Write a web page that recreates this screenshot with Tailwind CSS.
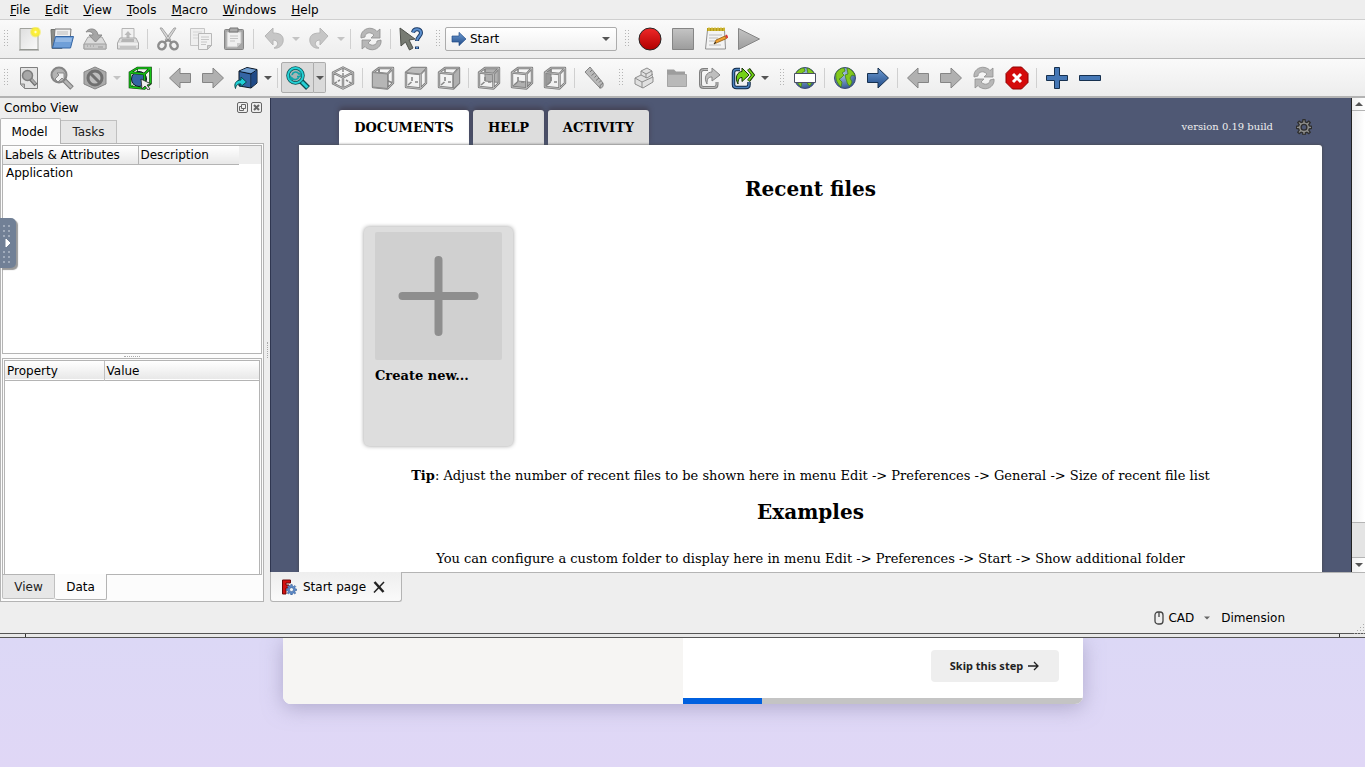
<!DOCTYPE html>
<html lang="en">
<head>
<meta charset="utf-8">
<title>FreeCAD - Start page</title>
<script src="https://cdn.jsdelivr.net/npm/@tailwindcss/browser@4"></script>
</head>
<body class="h-screen overflow-hidden bg-[#dedaf6] font-['DejaVu_Sans',sans-serif] text-xs text-black">

<svg class="absolute size-0" xmlns="http://www.w3.org/2000/svg">
  <defs>
    <linearGradient id="gray" x1="0" y1="0" x2="0" y2="1"><stop offset="0" stop-color="#c4c4c4"/><stop offset="1" stop-color="#9c9c9c"/></linearGradient>
    <linearGradient id="paper" x1="0" y1="0" x2="1" y2="1"><stop offset="0" stop-color="#dedede"/><stop offset="1" stop-color="#fafafa"/></linearGradient>
    <linearGradient id="blue" x1="0" y1="0" x2="0" y2="1"><stop offset="0" stop-color="#6d9bd2"/><stop offset="1" stop-color="#204a87"/></linearGradient>
    <linearGradient id="red" x1="0" y1="0" x2="0" y2="1"><stop offset="0" stop-color="#ef2929"/><stop offset="1" stop-color="#b00000"/></linearGradient>
    <radialGradient id="glow"><stop offset="0" stop-color="#fff"/><stop offset=".3" stop-color="#fff13a"/><stop offset=".65" stop-color="#f5ea3c"/><stop offset="1" stop-color="#f5ea3c" stop-opacity="0"/></radialGradient>
    <radialGradient id="sea" cx=".4" cy=".3" r=".8"><stop offset="0" stop-color="#a9c5ea"/><stop offset="1" stop-color="#274b86"/></radialGradient>
  </defs>
  <symbol id="new" viewBox="0 0 24 24"><path d="M3 1.500h18v21H3z" fill="url(#paper)" stroke="#a0a29d"/><path d="M2 23h20" stroke="#8a8c87"/><circle cx="18.500" cy="5" r="6" fill="url(#glow)"/></symbol>
  <symbol id="open" viewBox="0 0 24 24"><path d="M1 2.500h7l1 2h3v17H2z" fill="#8b8d89" stroke="#6f716d"/><path d="M5 2h16l-1 12H4z" fill="#f0f0f0" stroke="#777"/><path d="M7 5h11M7 7h11" stroke="#bbb"/><path d="M5.500 9.500h18L20.500 21H2.500z" fill="#6f9fd8" stroke="#3465a4"/><path d="M6 11h16l-.8 4H5z" fill="#93b8e4"/></symbol>
  <symbol id="save" viewBox="0 0 24 24"><path d="M5 10h14l4 7v5H1v-5z" fill="#dcdcdc" stroke="#a4a4a4"/><path d="M1 17h22v5H1z" fill="#c9c9c9" stroke="#a0a0a0"/><path d="M4 19h1M7 19h1M10 19h1M15 20h5" stroke="#999"/><path d="M3 5c2-4 11-5 12 3h4l-6.500 7L6 8h4c0-3-3-4-7-3z" fill="#a5a5a5" stroke="#8c8c8c"/></symbol>
  <symbol id="print" viewBox="0 0 24 24"><path d="M6 1.500h12V14H6z" fill="#f1f1f1" stroke="#b5b5b5"/><path d="M12 4l3.500 4h-2v4h-3V8h-2z" fill="#bababa"/><path d="M4 11h16l2.500 5v6h-21v-6z" fill="#dedede" stroke="#a8a8a8"/><path d="M6 12h12v3H5z" fill="#b5b5b5"/><path d="M2 17h20" stroke="#fff"/><path d="M4 20h16" stroke="#aaa"/></symbol>
  <symbol id="cut" viewBox="0 0 24 24"><path d="M4 1l9 14 2-2L6 1zM20 1l-9 14-2-2L18 1z" fill="#d8d8d8" stroke="#a4a4a4"/><ellipse cx="6" cy="18.500" rx="3.500" ry="4" fill="none" stroke="#8d8d8d" stroke-width="2.500" transform="rotate(35 6 18.500)"/><ellipse cx="18" cy="18.500" rx="3.500" ry="4" fill="none" stroke="#8d8d8d" stroke-width="2.500" transform="rotate(-35 18 18.500)"/><path d="M8.500 15.500l3.500-3 3.500 3" fill="none" stroke="#8d8d8d" stroke-width="2"/></symbol>
  <symbol id="copy" viewBox="0 0 24 24"><path d="M1.500 1.500h14v17h-14z" fill="#efefef" stroke="#c6c6c6"/><path d="M4 5h9M4 8h5M4 11h5" stroke="#d5d5d5"/><path d="M9.500 6.500h13v12l-4 4h-9z" fill="#f1f1f1" stroke="#b8b8b8"/><path d="M12 10h8M12 12.500h8M12 15h6M12 17.500h5" stroke="#c6c6c6"/><path d="M22.500 18.500h-4v4z" fill="#ccc" stroke="#b5b5b5"/></symbol>
  <symbol id="paste" viewBox="0 0 24 24"><rect x="2.500" y="2.500" width="19" height="20" rx="1" fill="#a6a6a6" stroke="#858585"/><path d="M5 5h14v11l-4 4H5z" fill="#f0f0f0" stroke="#c4c4c4"/><path d="M8 1h8v4H7z" fill="#aaa" stroke="#777"/><path d="M8 9h8M8 11.500h8M8 14h5" stroke="#c4c4c4"/><path d="M19 16h-4v4z" fill="#ccc"/></symbol>
  <symbol id="undo" viewBox="0 0 24 24"><path d="M3 9l8-8v5c8 0 11 3 10 9-1 4-5 7-9 6 5-2 5-8-1-8v5z" fill="#c6c6c6" stroke="#b6b6b6"/></symbol>
  <symbol id="refresh" viewBox="0 0 24 24"><path d="M2 11C1 5 7 0 13 1.500c2 .5 4 1.500 5 3L21 2v9h-9l3-3C11 4 6 6 6 10zM22 13c1 6-5 11-11 9.500-2-.5-4-1.500-5-3L3 22v-9h9l-3 3c4 4 9 2 9-2z" fill="#b7b7b7" stroke="#8f8f8f" stroke-width=".8"/></symbol>
  <symbol id="whats" viewBox="0 0 24 24"><path d="M1 1l15 11-6 1 4 8-3.500 2-4-8L2 19z" fill="#777b73" stroke="#4d504a"/><path d="M14 5.500c1-5 8-4 8 .5 0 3-4 4-4 8M18 19.500v2.500" fill="none" stroke="#1c3b66" stroke-width="4"/><path d="M14 5.500c1-5 8-4 8 .5 0 3-4 4-4 7.500M18 20v1.500" fill="none" stroke="#5b8fce" stroke-width="2"/></symbol>
  <symbol id="arrow" viewBox="0 0 24 24"><path d="M1.500 7.500H12V2l10.500 10L12 22v-5.500H1.500z"/></symbol>
  <symbol id="record" viewBox="0 0 24 24"><circle cx="12" cy="12" r="11" fill="url(#red)" stroke="#262626"/></symbol>
  <symbol id="stop" viewBox="0 0 24 24"><path d="M1.500 1.500h21v21h-21z" fill="url(#gray)" stroke="#858585"/></symbol>
  <symbol id="note" viewBox="0 0 24 24"><path d="M3.500 3h17l1 19h-20z" fill="#f3f3f3" stroke="#909090"/><path d="M3 1h18v3H3z" fill="#b59b13"/><path d="M5 0v4M8 0v4M11 0v4M14 0v4M17 0v4M20 0v4" stroke="#e0cc58"/><path d="M5 8h13M5 11h9M5 14h6M5 18h12" stroke="#bdbdbd"/><path d="M10 17l2-4 9-4 1.500 2.500-9 4z" fill="#f0a030" stroke="#8a5a12" stroke-width=".8"/><path d="M22 8l1.500 3" stroke="#d33" stroke-width="2"/><path d="M10 17l2-2" stroke="#333"/></symbol>
  <symbol id="play" viewBox="0 0 24 24"><path d="M1.500 1.500l21 10.500-21 10.500z" fill="url(#gray)" stroke="#858585"/></symbol>

  <symbol id="fitall" viewBox="0 0 24 24"><path d="M3.500 1.500h17v21h-13l-4-4z" fill="#e4e4e4" stroke="#7f7f7f"/><path d="M3.500 18h4v4.500" fill="#bbb" stroke="#8a8a8a"/><path d="M13.500 13l5.500 6" stroke="#6d6d6d" stroke-width="4"/><path d="M14 13l4.500 5" stroke="#aaa" stroke-width="2"/><circle cx="10.500" cy="9.500" r="5" fill="#a8a8a8" stroke="#7d7d7d" stroke-width="1.500"/></symbol>
  <symbol id="fitsel" viewBox="0 0 24 24"><path d="M14 14l8 8" stroke="#777" stroke-width="5"/><path d="M14.500 14.500l7 7" stroke="#b5b5b5" stroke-width="3"/><circle cx="9" cy="9" r="7.500" fill="#b3b3b3" stroke="#858585" stroke-width="2"/><path d="M5 13l4-4-2-2h7v7l-2-2-4 4z" fill="#f0f0f0" stroke="#777" stroke-width=".8"/></symbol>
  <symbol id="draw" viewBox="0 0 24 24"><path d="M12 1l11 5v12l-11 5-11-5V6z" fill="#aaa" stroke="#858585"/><circle cx="12" cy="12" r="7" fill="#bdbdbd" stroke="#707070" stroke-width="3"/><path d="M7 7l10 10" stroke="#707070" stroke-width="3"/></symbol>
  <symbol id="bbox" viewBox="0 0 24 24"><path d="M9.500 2.500v14l12 .5M9.500 16.500l-7 4" fill="none" stroke="#16a016"/><circle cx="11" cy="13" r="7.500" fill="#3465a4" stroke="#0b1521"/><path d="M2 6.500l7.500-4.500H22.500v15.500l-6 5L2 21zM2 6.500L16.500 8l6-6M16.500 8v14" fill="none" stroke="#0c3b0c" stroke-width="2.600"/><path d="M2 6.500l7.500-4.500H22.500v15.500l-6 5L2 21zM2 6.500L16.500 8l6-6M16.500 8v14" fill="none" stroke="#16c416" stroke-width="1.400"/><path d="M13 13l10 5-4 1 3 4-2 1-3-4-3 3z" fill="#eee" stroke="#222" stroke-width=".8"/></symbol>
  <symbol id="linkcube" viewBox="0 0 24 24"><path d="M5 5l8-3.500 10 2V17l-6 5-12-2z" fill="#3465a4" stroke="#0b1521"/><path d="M5.500 5.500L17 8v13.500M17 8l5.500-4" fill="none" stroke="#0b1521"/><path d="M6 5l7-3 9 2-5 3z" fill="#729fcf"/><path d="M17.500 8.500L22.500 5v12l-5 4z" fill="#204a87"/><path d="M1.500 22.500c-2-5 1-8.500 5.500-8.500v-3l5.500 5-5.500 4.500v-2.500c-3-.5-5 1-5.500 4.500z" fill="#1fd0d6" stroke="#07484c"/></symbol>
  <symbol id="zoomsync" viewBox="0 0 24 24"><path d="M14 14l8 8" stroke="#0b4c50" stroke-width="5.500"/><path d="M14.500 14.500l7 7" stroke="#25d0d4" stroke-width="3"/><circle cx="9.500" cy="9.500" r="7.500" fill="#a9b5b5" stroke="#0b4c50" stroke-width="3.500"/><circle cx="9.500" cy="9.500" r="7.500" fill="none" stroke="#25d0d4" stroke-width="2"/><path d="M6 9c1-3.500 5-4 7-1l1.500-1v3.500H11M13 10.500c-1 3.500-5 4-7 1.500l-1.500 1V9.500" fill="none" stroke="#12a3a8" stroke-width="1.600"/></symbol>
  <symbol id="iso" viewBox="0 0 24 24"><path d="M12 2v8.500M2.500 18l6.500-4M21.500 18l-6.500-4" fill="none" stroke="#8a8a8a" stroke-width="1.500" stroke-dasharray="4 1"/><path d="M12 1.500L22 6.500v11L12 22.500 2 17.500v-11zM2 6.500l10 5 10-5M12 11.500v11" fill="none" stroke="#7b7b7b" stroke-width="2.400" stroke-linejoin="round"/><path d="M12 1.500L22 6.500v11L12 22.500 2 17.500v-11zM2 6.500l10 5 10-5M12 11.500v11" fill="none" stroke="#c2c2c2" stroke-width=".9"/></symbol>
  <symbol id="wire" viewBox="0 0 24 24"><path d="M8 3v3M8 11v4M7.500 16L4 19M11 16h3" fill="none" stroke="#888" stroke-width="1.600"/><path d="M2 6.500L8 2h14v15L16.500 22.500 2 21zM2 6.500l14.500 1.500L22 2M16.500 8v14" fill="none" stroke="#7d7d7d" stroke-width="2.400" stroke-linejoin="round"/><path d="M2 6.500L8 2h14v15L16.500 22.500 2 21zM2 6.500l14.500 1.500L22 2M16.500 8v14" fill="none" stroke="#bdbdbd" stroke-width=".9"/></symbol>
  <symbol id="front" viewBox="0 0 24 24"><path d="M8 7V2M16 14.500l6 2.500" stroke="#888" stroke-width="1.600"/><use href="#wire"/><path d="M1.500 6.500l15 1.500v14.500l-15-1.500z" fill="#b6b6b6" stroke="#8a8a8a"/></symbol>
  <symbol id="top" viewBox="0 0 24 24"><use href="#wire"/><path d="M1.500 6.500L8 1.500h14.500l-6 6.500z" fill="#bcbcbc" stroke="#8a8a8a"/></symbol>
  <symbol id="right" viewBox="0 0 24 24"><use href="#wire"/><path d="M16.500 8l6-6.500V17l-6 5.500z" fill="#b0b0b0" stroke="#8a8a8a"/></symbol>
  <symbol id="rear" viewBox="0 0 24 24"><path d="M8 2h14v14.500L8 15z" fill="#b0b0b0" stroke="#8a8a8a"/><use href="#wire"/></symbol>
  <symbol id="bottom" viewBox="0 0 24 24"><path d="M2 21l6-6 14 1.500-5.500 5.500z" fill="#b0b0b0" stroke="#8a8a8a"/><use href="#wire"/></symbol>
  <symbol id="left" viewBox="0 0 24 24"><path d="M2 6.500L8 2v13.500L2 21z" fill="#9a9a9a" stroke="#8a8a8a"/><use href="#wire"/></symbol>
  <symbol id="ruler" viewBox="0 0 24 24"><path d="M2 6l5-5 13 16q1 5-3 5l-1-1z" fill="#b9b9b9" stroke="#858585"/><path d="M9 4L7 6M11.500 7l-3 2.500M13.500 9.500l-2 2M16 12l-3 2.500M18 14.500l-2 2M20 17l-3 2.500v3" fill="none" stroke="#777"/></symbol>
  <symbol id="part" viewBox="0 0 24 24"><path d="M3 12l6-3V5l6-3 5 3v5l1 1v5L11 22l-8-4z" fill="#e0e0e0" stroke="#8d8d8d"/><path d="M3 12l7 4 11-5M10 16v6M9 9l6 3 6-4M9 5l5 3 6-3M14 8v4" fill="none" stroke="#8d8d8d"/></symbol>
  <symbol id="folder" viewBox="0 0 24 24"><path d="M2 3.500h7l2 2h9v14H2z" fill="#9d9d9d"/><path d="M2.500 8.500h19v12h-19z" fill="#b9b9b9" stroke="#a4a4a4"/></symbol>
  <symbol id="link" viewBox="0 0 24 24"><path d="M10 3.500H5.500q-3 0-3 3v12q0 3 3 3H16q3 0 3-3V16" fill="none" stroke="#808080" stroke-width="3"/><path d="M10 3.500H5.500q-3 0-3 3v12q0 3 3 3H16q3 0 3-3V16" fill="none" stroke="#bcbcbc"/><path d="M9 18C5 11 9 6 14 6V2l8 7-8 6v-4c-4 0-5 2-5 7z" fill="#bebebe" stroke="#858585"/></symbol>
  <symbol id="linkgo" viewBox="0 0 24 24"><path d="M9 3.500H5.500q-3 0-3 3v12q0 3 3 3H15q3 0 3-3V16" fill="none" stroke="#102846" stroke-width="3.500"/><path d="M9 3.500H5.500q-3 0-3 3v12q0 3 3 3H15q3 0 3-3V16" fill="none" stroke="#4c82bd" stroke-width="1.500"/><path d="M17.500 3l4.500 6-4.500 6" fill="none" stroke="#173306" stroke-width="3.500"/><path d="M17.500 3.500l4.500 5.500-4.500 5.500" fill="none" stroke="#73d216" stroke-width="1.800"/><path d="M7 18C3 11 7 5.500 11 5.500V2l7 7-7 6.500v-4c-3 0-4 2-4 6.500z" fill="#73d216" stroke="#173306"/></symbol>
  <symbol id="globe" viewBox="0 0 24 24"><circle cx="12" cy="12" r="10.500" fill="url(#sea)" stroke="#3e4a78"/><path d="M3 7c2-3 5-5 8-5l1 3-3 2 2 2-3 3-2 1 3 3-1 5c-3-3-6-7-5-14zM14 2c4 1 7 4 8 8l-3-1-2 3 2 4-2 4c-3-1-3-5-4-7l-1-4 3-1z" fill="#83c81e" stroke="#3e7b13" stroke-width=".7"/></symbol>
  <symbol id="url" viewBox="0 0 24 24"><use href="#globe"/><path d="M1.500 7.500h21v9h-21z" fill="#fff" stroke="#4b5062"/></symbol>
  <symbol id="halt" viewBox="0 0 24 24"><path d="M7.500 1h9L23 7.500v9L16.500 23h-9L1 16.500v-9z" fill="#d40b0b" stroke="#8e0000"/><path d="M8 8l8 8M16 8l-8 8" stroke="#fff" stroke-width="3"/></symbol>
  <symbol id="plus" viewBox="0 0 24 24"><path d="M9.500 1.500h5v8h8v5h-8v8h-5v-8h-8v-5h8z" fill="#4577b5" stroke="#16304f"/></symbol>
  <symbol id="minus" viewBox="0 0 24 24"><path d="M1.500 9.500h21v5h-21z" fill="#4577b5" stroke="#16304f"/></symbol>
  <symbol id="caret" viewBox="0 0 8 4"><path d="M0 0h8L4 4z"/></symbol>
  <symbol id="gear" viewBox="0 0 24 24"><path d="M10.500 1h3l.6 3.500 2.200.9 2.900-2.100 2.100 2.100-2.100 2.900.9 2.200 3.400.6v3l-3.400.6-.9 2.200 2.100 2.900-2.100 2.100-2.900-2.100-2.200.9-.6 3.300h-3l-.6-3.300-2.200-.9-2.900 2.100-2.100-2.100 2.100-2.900-.9-2.200L.5 14v-3l3.400-.6.900-2.200-2.100-2.900 2.100-2.100 2.900 2.100 2.200-.9zM12 8a4.300 4.300 0 100 8.600A4.300 4.300 0 0012 8z" fill-rule="evenodd"/></symbol>
  <symbol id="dots" viewBox="0 0 4 18"><path d="M.5 0v18M3.500 0v18" stroke="#b5b5b5" stroke-dasharray="1 2"/></symbol>
</svg>

<div class="flex h-full flex-col">
<div class="relative flex min-h-0 flex-1 flex-col bg-[#eee]">
  <nav class="flex h-5 shrink-0 items-center gap-[15px] border-b border-[#cfcfcf] pl-[10px]" aria-label="Menu bar">
    <button><u>F</u>ile</button><button><u>E</u>dit</button><button><u>V</u>iew</button><button><u>T</u>ools</button><button><u>M</u>acro</button><button><u>W</u>indows</button><button><u>H</u>elp</button>
  </nav>

  <div class="flex h-[39px] shrink-0 items-center border-b border-[#b3b3b3] bg-linear-to-b from-[#fafafa] to-[#ededed]" role="toolbar" aria-label="File">
    <span class="flex w-3 justify-center"><svg class="h-[18px] w-1"><use href="#dots"/></svg></span>
    <button class="grid w-[33px] place-items-center" aria-label="New"><svg class="size-6"><use href="#new"/></svg></button>
    <button class="grid w-[33px] place-items-center" aria-label="Open"><svg class="size-6"><use href="#open"/></svg></button>
    <button class="grid w-[33px] place-items-center" aria-label="Save"><svg class="size-6"><use href="#save"/></svg></button>
    <button class="grid w-[33px] place-items-center" aria-label="Print"><svg class="size-6"><use href="#print"/></svg></button>
    <span class="mx-[3px] h-5 w-px bg-[#d0d0d0]"></span>
    <button class="grid w-[33px] place-items-center" aria-label="Cut"><svg class="size-6"><use href="#cut"/></svg></button>
    <button class="grid w-[33px] place-items-center" aria-label="Copy"><svg class="size-6"><use href="#copy"/></svg></button>
    <button class="grid w-[33px] place-items-center" aria-label="Paste"><svg class="size-6"><use href="#paste"/></svg></button>
    <span class="mx-[3px] h-5 w-px bg-[#d0d0d0]"></span>
    <button class="grid w-[33px] place-items-center" aria-label="Undo"><svg class="size-6"><use href="#undo"/></svg></button>
    <button class="grid w-3 place-items-center" aria-label="Undo list"><svg class="h-1 w-2 fill-[#c4c4c4]"><use href="#caret"/></svg></button>
    <button class="grid w-[33px] place-items-center" aria-label="Redo"><svg class="size-6 -scale-x-100"><use href="#undo"/></svg></button>
    <button class="grid w-3 place-items-center" aria-label="Redo list"><svg class="h-1 w-2 fill-[#c4c4c4]"><use href="#caret"/></svg></button>
    <span class="mx-[3px] h-5 w-px bg-[#d0d0d0]"></span>
    <button class="grid w-[33px] place-items-center" aria-label="Refresh"><svg class="size-6"><use href="#refresh"/></svg></button>
    <span class="mx-[3px] h-5 w-px bg-[#d0d0d0]"></span>
    <button class="grid w-[33px] place-items-center" aria-label="What's this"><svg class="size-6"><use href="#whats"/></svg></button>
    <span class="ml-1 flex w-[14px] justify-center"><svg class="h-[18px] w-1"><use href="#dots"/></svg></span>
    <label class="grid items-center">
      <select aria-label="Workbench" class="col-start-1 row-start-1 h-6 w-[172px] appearance-none rounded-[2px] border border-[#acacac] bg-linear-to-b from-white to-[#f0f0f0] pl-6"><option>Start</option></select>
      <svg class="pointer-events-none col-start-1 row-start-1 ml-[6px] size-4 fill-[url(#blue)] stroke-[#204a87]"><use href="#arrow"/></svg>
      <svg class="pointer-events-none col-start-1 row-start-1 mr-[7px] h-1 w-2 justify-self-end fill-[#555]"><use href="#caret"/></svg>
    </label>
    <span class="ml-1 flex w-3 justify-center"><svg class="h-[18px] w-1"><use href="#dots"/></svg></span>
    <button class="grid w-[33px] place-items-center" aria-label="Record macro"><svg class="size-6"><use href="#record"/></svg></button>
    <button class="grid w-[33px] place-items-center" aria-label="Stop macro"><svg class="size-6"><use href="#stop"/></svg></button>
    <button class="grid w-[33px] place-items-center" aria-label="Macros"><svg class="size-6"><use href="#note"/></svg></button>
    <button class="grid w-[33px] place-items-center" aria-label="Run macro"><svg class="size-6"><use href="#play"/></svg></button>
  </div>

  <div class="flex h-[39px] shrink-0 items-center border-b-2 border-[#b3b3b3] bg-linear-to-b from-[#fafafa] to-[#ededed]" role="toolbar" aria-label="View">
    <span class="flex w-3 justify-center"><svg class="h-[18px] w-1"><use href="#dots"/></svg></span>
    <button class="grid w-[33px] place-items-center" aria-label="Fit all"><svg class="size-6"><use href="#fitall"/></svg></button>
    <button class="grid w-[33px] place-items-center" aria-label="Fit selection"><svg class="size-6"><use href="#fitsel"/></svg></button>
    <button class="grid w-[33px] place-items-center" aria-label="Draw style"><svg class="size-6"><use href="#draw"/></svg></button>
    <button class="grid w-3 place-items-center" aria-label="Draw styles"><svg class="h-1 w-2 fill-[#c4c4c4]"><use href="#caret"/></svg></button>
    <button class="grid w-[33px] place-items-center" aria-label="Bounding box"><svg class="size-6"><use href="#bbox"/></svg></button>
    <span class="mx-[3px] h-5 w-px bg-[#d0d0d0]"></span>
    <button class="grid w-[33px] place-items-center" aria-label="Back"><svg class="size-6 -scale-x-100 fill-[#b0b0b0] stroke-[#858585]"><use href="#arrow"/></svg></button>
    <button class="grid w-[33px] place-items-center" aria-label="Forward"><svg class="size-6 fill-[#b0b0b0] stroke-[#858585]"><use href="#arrow"/></svg></button>
    <button class="grid w-[33px] place-items-center" aria-label="Go to linked object"><svg class="size-6"><use href="#linkcube"/></svg></button>
    <button class="grid w-3 place-items-center" aria-label="Link navigation"><svg class="h-1 w-2 fill-[#555]"><use href="#caret"/></svg></button>
    <span class="mx-[3px] h-5 w-px bg-[#d0d0d0]"></span>
    <button class="grid h-[31px] w-[33px] place-items-center rounded-l-[2px] border border-[#acacac] bg-[#dadada]" aria-label="Sync view"><svg class="size-6"><use href="#zoomsync"/></svg></button>
    <button class="grid h-[31px] w-3 place-items-center rounded-r-[2px] border border-l-0 border-[#acacac] bg-[#dadada]" aria-label="Sync options"><svg class="h-1 w-2 fill-[#555]"><use href="#caret"/></svg></button>
    <button class="grid w-[33px] place-items-center" aria-label="Isometric"><svg class="size-6"><use href="#iso"/></svg></button>
    <span class="mx-[3px] h-5 w-px bg-[#d0d0d0]"></span>
    <button class="grid w-[33px] place-items-center" aria-label="Front"><svg class="size-6"><use href="#front"/></svg></button>
    <button class="grid w-[33px] place-items-center" aria-label="Top"><svg class="size-6"><use href="#top"/></svg></button>
    <button class="grid w-[33px] place-items-center" aria-label="Right"><svg class="size-6"><use href="#right"/></svg></button>
    <span class="mx-[3px] h-5 w-px bg-[#d0d0d0]"></span>
    <button class="grid w-[33px] place-items-center" aria-label="Rear"><svg class="size-6"><use href="#rear"/></svg></button>
    <button class="grid w-[33px] place-items-center" aria-label="Bottom"><svg class="size-6"><use href="#bottom"/></svg></button>
    <button class="grid w-[33px] place-items-center" aria-label="Left"><svg class="size-6"><use href="#left"/></svg></button>
    <span class="mx-[3px] h-5 w-px bg-[#d0d0d0]"></span>
    <button class="grid w-[33px] place-items-center" aria-label="Measure"><svg class="size-6"><use href="#ruler"/></svg></button>
    <span class="ml-1 flex w-3 justify-center"><svg class="h-[18px] w-1"><use href="#dots"/></svg></span>
    <button class="grid w-[33px] place-items-center" aria-label="Create part"><svg class="size-6"><use href="#part"/></svg></button>
    <button class="grid w-[33px] place-items-center" aria-label="Create group"><svg class="size-6"><use href="#folder"/></svg></button>
    <button class="grid w-[33px] place-items-center" aria-label="Make link"><svg class="size-6"><use href="#link"/></svg></button>
    <button class="grid w-[33px] place-items-center" aria-label="Link actions"><svg class="size-6"><use href="#linkgo"/></svg></button>
    <button class="grid w-3 place-items-center" aria-label="More link actions"><svg class="h-1 w-2 fill-[#555]"><use href="#caret"/></svg></button>
    <span class="ml-1 flex w-[13px] justify-center"><svg class="h-[18px] w-1"><use href="#dots"/></svg></span>
    <button class="grid w-[33px] place-items-center" aria-label="Set URL"><svg class="size-6"><use href="#url"/></svg></button>
    <span class="mx-[3px] h-5 w-px bg-[#d0d0d0]"></span>
    <button class="grid w-[33px] place-items-center" aria-label="Open website"><svg class="size-6"><use href="#globe"/></svg></button>
    <button class="grid w-[33px] place-items-center" aria-label="Start"><svg class="size-6 fill-[url(#blue)] stroke-[#16304f]"><use href="#arrow"/></svg></button>
    <span class="mx-[3px] h-5 w-px bg-[#d0d0d0]"></span>
    <button class="grid w-[33px] place-items-center" aria-label="Previous page"><svg class="size-6 -scale-x-100 fill-[#b0b0b0] stroke-[#858585]"><use href="#arrow"/></svg></button>
    <button class="grid w-[33px] place-items-center" aria-label="Next page"><svg class="size-6 fill-[#b0b0b0] stroke-[#858585]"><use href="#arrow"/></svg></button>
    <button class="grid w-[33px] place-items-center" aria-label="Reload page"><svg class="size-6"><use href="#refresh"/></svg></button>
    <button class="grid w-[33px] place-items-center" aria-label="Stop loading"><svg class="size-6"><use href="#halt"/></svg></button>
    <span class="mx-[3px] h-5 w-px bg-[#d0d0d0]"></span>
    <button class="grid w-[33px] place-items-center" aria-label="Zoom in"><svg class="size-6"><use href="#plus"/></svg></button>
    <button class="grid w-[33px] place-items-center" aria-label="Zoom out"><svg class="size-6"><use href="#minus"/></svg></button>
  </div>

  <div class="flex min-h-0 flex-1">
    <aside class="flex w-[264px] shrink-0 flex-col">
      <header class="flex h-5 items-center gap-[3px] pr-[2px] pb-px pl-1">
        <h2 class="flex-1">Combo View</h2>
        <button aria-label="Float"><svg class="size-[11px]" viewBox="0 0 11 11" fill="none" stroke="#666"><rect x=".5" y=".5" width="10" height="10" rx="1.500"/><path d="M4.500 2.500h4v4h-4zM6.500 6.500v2h-4v-4h2"/></svg></button>
        <button aria-label="Close"><svg class="size-[11px]" viewBox="0 0 11 11" fill="none" stroke="#666"><rect x=".5" y=".5" width="10" height="10" rx="1.500"/><path d="M3 3l5 5M8 3l-5 5" stroke-width="2"/></svg></button>
      </header>
      <div class="flex h-[25px] items-end" role="tablist">
        <button role="tab" class="z-10 -mb-px h-[26px] w-[61px] rounded-t-[2px] border border-b-0 border-[#b4b4b4] bg-[#fcfcfc] pr-[2px]">Model</button>
        <button role="tab" class="h-[23px] w-14 border border-b-0 border-l-0 border-[#c0c0c0] bg-[#e7e7e7] text-[#222]">Tasks</button>
      </div>
      <div class="flex min-h-0 flex-1 flex-col border border-[#b4b4b4] bg-[#fcfcfc] p-px pb-0">
        <div class="h-[209px] border border-[#b4b4b4] bg-white">
          <table class="w-full table-fixed border-collapse">
            <thead><tr class="h-[18px] text-left"><th class="w-[135px] border-r border-b border-[#b4b4b4] bg-linear-to-b from-white to-[#e8e8e8] pl-[2px] font-normal whitespace-nowrap">Labels &amp; Attributes</th><th class="w-[101px] border-b border-[#b4b4b4] bg-linear-to-b from-white to-[#e8e8e8] pl-[2px] font-normal">Description</th><th class="bg-[#eee]"></th></tr></thead>
            <tbody><tr><td class="pl-[3px]" colspan="3">Application</td></tr></tbody>
          </table>
        </div>
        <div class="grid h-[4px] place-items-center"><span class="w-4 border-t border-dotted border-[#aaa]"></span></div>
        <div class="min-h-0 flex-1 border border-[#b4b4b4] bg-[#fcfcfc] p-px pb-0">
          <div class="h-full border border-[#b4b4b4] border-b-0 bg-white">
            <table class="w-full table-fixed border-collapse">
              <thead><tr class="h-[19px] border-b border-[#b4b4b4] bg-linear-to-b from-white to-[#e8e8e8] text-left"><th class="w-[99px] border-r border-[#c0c0c0] pt-px pl-[2px] font-normal">Property</th><th class="pt-px pl-[2px] font-normal">Value</th></tr></thead>
            </table>
          </div>
        </div>
        <div class="flex h-[26px] items-start" role="tablist">
          <button role="tab" class="h-6 w-[53px] rounded-b-[2px] border border-t-0 border-[#c0c0c0] bg-[#e7e7e7] text-[#222]">View</button>
          <button role="tab" class="-mt-px h-[26px] w-[52px] rounded-b-[2px] border border-t-0 border-l-0 border-[#b4b4b4] bg-[#fcfcfc] pt-px">Data</button>
        </div>
      </div>
      <div class="absolute top-[218px] left-0 grid h-[50px] w-4 place-items-center rounded-r-[5px] bg-[#718096] shadow-[2px_2px_1px_#999]">
        <svg class="h-11 w-[10px]" viewBox="0 0 10 44"><path d="M1 4v12M6 4v12M1 30v12M6 30v12" stroke="#a0abbb" stroke-width="2" stroke-dasharray="2 3"/><path d="M3 18l4 4-4 4z" fill="#fff" stroke="#fff" stroke-linejoin="round"/></svg>
      </div>
    </aside>
    <div class="grid w-[6px] place-items-center"><span class="h-4 border-l border-dotted border-[#aaa]"></span></div>

    <section class="flex min-w-0 flex-1 flex-col">
      <div class="flex min-h-0 flex-1">
        <main class="flex min-w-0 flex-1 flex-col overflow-hidden border-l border-[#2f3650] bg-[#4f5874] pr-[29px] pl-7 font-['DejaVu_Serif',serif] text-[13px]">
          <div class="flex items-center pt-3 pl-10">
            <div class="flex flex-1 gap-1 font-bold">
              <button class="h-[35px] w-[130px] rounded-t-[3px] bg-white pt-px shadow-[0_-3px_5px_#444355]">DOCUMENTS</button>
              <button class="h-[35px] w-[71px] rounded-t-[3px] bg-[#ddd] pt-px shadow-[0_-3px_5px_#444355]">HELP</button>
              <button class="h-[35px] w-[101px] rounded-t-[3px] bg-[#ddd] pt-px shadow-[0_-3px_5px_#444355]">ACTIVITY</button>
            </div>
            <span class="mr-[23px] pb-px text-[10px] text-[#eee]">version 0.19 build</span>
            <a href="#preferences" class="mr-[10px] pb-px" aria-label="Preferences"><svg class="size-4 fill-[#8f8f8c] stroke-[#2e2e2e] stroke-2"><use href="#gear"/></svg></a>
          </div>
          <div class="z-10 flex flex-1 flex-col rounded-tr-[3px] bg-white px-16 shadow-[0_0_3px_#444]">
            <h1 class="mt-8 text-center text-xl leading-6 font-bold">Recent files</h1>
            <a href="#new" class="mt-[26px] ml-px block h-[219px] w-[149px] shrink-0 rounded-[5px] bg-[#ddd] px-[11px] pt-[5px] font-bold shadow-[0_0_4px_#999]">
              <svg class="h-[128px] w-[127px] rounded-[2px] bg-[#d0d0d0]" viewBox="0 0 127 128"><path d="M63.500 28v72M27.500 64h72" stroke="#8e8e8e" stroke-width="8" stroke-linecap="round"/></svg>
              <span class="mt-2 block leading-4">Create new...</span>
            </a>
            <p class="mt-5 text-center leading-5"><b>Tip</b>: Adjust the number of recent files to be shown here in menu Edit -&gt; Preferences -&gt; General -&gt; Size of recent file list</p>
            <h1 class="mt-[14px] text-center text-xl leading-6 font-bold">Examples</h1>
            <p class="mt-[25px] text-center leading-5 whitespace-nowrap">You can configure a custom folder to display here in menu Edit -&gt; Preferences -&gt; Start -&gt; Show additional folder</p>
          </div>
        </main>
        <div class="flex w-[14px] flex-col border-l border-[#222] bg-linear-to-r from-[#f0f0f0] to-white">
          <button class="grid h-[13px] place-items-center border-b border-[#b4b4b4]" aria-label="Scroll up"><svg class="h-1 w-2 -scale-y-100 fill-[#555]"><use href="#caret"/></svg></button>
          <div class="flex-1"></div>
          <div class="h-9 border-y border-[#b4b4b4] bg-[#e4e4e4]"></div>
          <button class="grid h-[14px] place-items-center" aria-label="Scroll down"><svg class="h-1 w-2 fill-[#555]"><use href="#caret"/></svg></button>
        </div>
      </div>
      <div class="flex h-[30px] border-t border-[#b4b4b4]">
        <div class="-mt-px flex w-[132px] items-center rounded-b-[3px] border border-t-0 border-[#b4b4b4] bg-linear-to-b from-[#eee] to-[#fafafa] pt-px pl-[10px]">
          <svg class="size-4" viewBox="0 0 16 16"><path d="M1.500 1h8v3H5v2h3v3H5v6H1.500z" fill="#d41111" stroke="#6b0808"/><svg x="5" y="5" width="11" height="11" fill="#5d8ac7" stroke="#204a87"><use href="#gear"/></svg></svg>
          <span class="ml-[6px]">Start page</span>
          <button class="ml-[7px]" aria-label="Close tab"><svg class="size-3" viewBox="0 0 12 12" stroke="#222"><path d="M1.500 1l9 10" stroke-width="2.500"/><path d="M11 1L1 11.500" stroke-width="1.500"/></svg></button>
        </div>
      </div>
    </section>
  </div>

  <footer class="flex h-[31px] shrink-0 items-center justify-end pt-px pr-20">
    <svg class="mr-1 h-[14px] w-[10px]" viewBox="0 0 10 14" fill="none" stroke="#444" stroke-width="1.300"><rect x="1" y="1" width="8" height="12" rx="3"/><path d="M5 1v5"/></svg>
    <button class="flex items-center gap-[10px]">CAD <svg class="h-1 w-[6px] fill-[#666]"><use href="#caret"/></svg></button>
    <span class="ml-[11px]">Dimension</span>
    <svg class="absolute right-0 bottom-1 size-3" viewBox="0 0 12 12"><path d="M1 11.500h11M4 8.500h8M7 5.500h5M10 2.500h2" stroke="#aaa" stroke-dasharray="1 2"/></svg>
  </footer>
  <div class="flex h-[5px] shrink-0 justify-between border-y border-[#555] bg-[#e8e8e8] px-[25px]"><span class="w-px bg-[#333]"></span><span class="w-px bg-[#333]"></span></div>
</div>

<div class="h-[129px] shrink-0 overflow-hidden bg-linear-to-b from-[#dcd8f6] to-[#e0d7f6]">
  <div class="mx-auto flex h-[66px] w-[800px] overflow-hidden rounded-b-[8px] bg-white shadow-[0_4px_20px_#8883a888]">
    <div class="w-1/2 bg-[#f6f5f3]"></div>
    <div class="flex w-1/2 flex-col justify-between">
      <button class="mt-3 mr-6 flex h-8 w-32 items-center justify-center gap-1 self-end rounded-[4px] bg-[#eee] font-['Noto_Sans',sans-serif] text-[11px] font-bold text-[#222]">Skip this step <svg class="size-3" viewBox="0 0 12 12" fill="none" stroke="#222" stroke-width="1.300"><path d="M1 6h10M7 2l4 4-4 4"/></svg></button>
      <div class="h-[6px] bg-[#c4c4c4]"><div class="h-full w-[79px] bg-[#0060df]"></div></div>
    </div>
  </div>
</div>
</div>
</body>
</html>
